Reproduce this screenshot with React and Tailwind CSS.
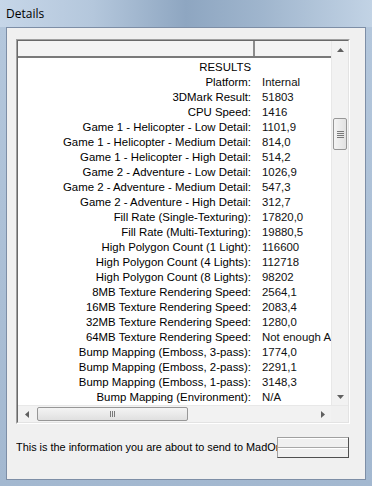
import React from "react";

const rows = [
  ["RESULTS", ""],
  ["Platform:", "Internal"],
  ["3DMark Result:", "51803"],
  ["CPU Speed:", "1416"],
  ["Game 1 - Helicopter - Low Detail:", "1101,9"],
  ["Game 1 - Helicopter - Medium Detail:", "814,0"],
  ["Game 1 - Helicopter - High Detail:", "514,2"],
  ["Game 2 - Adventure - Low Detail:", "1026,9"],
  ["Game 2 - Adventure - Medium Detail:", "547,3"],
  ["Game 2 - Adventure - High Detail:", "312,7"],
  ["Fill Rate (Single-Texturing):", "17820,0"],
  ["Fill Rate (Multi-Texturing):", "19880,5"],
  ["High Polygon Count (1 Light):", "116600"],
  ["High Polygon Count (4 Lights):", "112718"],
  ["High Polygon Count (8 Lights):", "98202"],
  ["8MB Texture Rendering Speed:", "2564,1"],
  ["16MB Texture Rendering Speed:", "2083,4"],
  ["32MB Texture Rendering Speed:", "1280,0"],
  ["64MB Texture Rendering Speed:", "Not enough AGP memory"],
  ["Bump Mapping (Emboss, 3-pass):", "1774,0"],
  ["Bump Mapping (Emboss, 2-pass):", "2291,1"],
  ["Bump Mapping (Emboss, 1-pass):", "3148,3"],
  ["Bump Mapping (Environment):", "N/A"],
];

const Arrow = ({ dir }) => {
  const pts = {
    up: "0,4 3.5,0 7,4",
    down: "0,0 3.5,4 7,0",
    left: "4,0 0,3.5 4,7",
    right: "0,0 4,3.5 0,7",
  }[dir];
  const vert = dir === "up" || dir === "down";
  return (
    <svg width={vert ? 7 : 4} height={vert ? 4 : 7}>
      <polygon points={pts} fill="#606060" />
    </svg>
  );
};

const App = () => {
  return (
    <div className="w-[372px] h-[486px] flex flex-col bg-[#a9bdd4] font-['Liberation_Sans',Arial,sans-serif] text-[11.4px] text-black overflow-hidden">
      {/* title bar */}
      <div className="h-[27px] flex items-center pl-[6px] bg-[linear-gradient(90deg,#c6d6e8_0%,#b4c7dc_25%,#8ea6c1_50%,#9fb5cd_70%,#c2d3e5_100%)]">
        <span className="font-['Open_Sans',sans-serif] text-[12px] text-black">Details</span>
      </div>

      <div className="flex-1 flex px-[6px] pb-[6px] bg-[linear-gradient(180deg,#b4c7dc_0%,#a3b8d0_100%)]">
        {/* client area */}
        <div className="flex-1 flex flex-col bg-[#f0f0f0] border border-[#7d8ea6]">
          {/* listbox */}
          <div className="ml-[9px] mt-[11px] w-[334px] h-[385px] border border-t-[#a0a0a0] border-l-[#a0a0a0] border-r-[#ffffff] border-b-[#ffffff]">
            <div className="w-full h-full border border-t-[#696969] border-l-[#696969] border-r-[#e3e3e3] border-b-[#e3e3e3] flex flex-col bg-white">
              <div className="flex h-[364px]">
                {/* content */}
                <div className="w-[313px] flex flex-col overflow-hidden">
                  <div className="h-[17px] flex bg-[#f4f4f4] border-b-2 border-b-[#7a7a7a]">
                    <div className="w-[237px] border-r-2 border-r-[#8c8c8c]" />
                    <div className="flex-1" />
                  </div>
                  <div className="pt-[2px] flex flex-col">
                    {rows.map(([label, value]) => (
                      <div key={label} className="h-[15px] flex items-center whitespace-nowrap">
                        <div className="w-[237px] shrink-0 overflow-hidden text-right pr-[4px] leading-[15px]">{label}</div>
                        <div className="pl-[7px] leading-[15px] text-[#111]">{value}</div>
                      </div>
                    ))}
                  </div>
                </div>
                {/* vertical scrollbar */}
                <div className="w-[17px] flex flex-col bg-[#f2f2f2] border-l border-l-[#e8e8e8]">
                  <div className="h-[17px] flex items-center justify-center">
                    <Arrow dir="up" />
                  </div>
                  <div className="flex-1 flex flex-col items-center">
                    <div className="mt-[60px] w-[14px] h-[32px] rounded-[2px] border border-[#979797] bg-[linear-gradient(90deg,#f4f4f4,#e2e2e2)] flex flex-col items-center justify-center gap-[1px]">
                      <div className="w-[7px] h-[1px] bg-[#7a7a7a]" />
                      <div className="w-[7px] h-[1px] bg-[#7a7a7a]" />
                      <div className="w-[7px] h-[1px] bg-[#7a7a7a]" />
                      <div className="w-[7px] h-[1px] bg-[#7a7a7a]" />
                    </div>
                  </div>
                  <div className="h-[17px] flex items-center justify-center">
                    <Arrow dir="down" />
                  </div>
                </div>
              </div>
              {/* horizontal scrollbar */}
              <div className="flex-1 flex bg-[#f2f2f2] border-t border-t-[#e8e8e8]">
                <div className="w-[313px] flex items-center">
                  <div className="w-[17px] flex justify-center">
                    <Arrow dir="left" />
                  </div>
                  <div className="ml-[2px] w-[151px] h-[14px] rounded-[2px] border border-[#979797] bg-[linear-gradient(180deg,#f4f4f4,#e0e0e0)] flex items-center justify-center gap-[1px]">
                    <div className="w-[1px] h-[6px] bg-[#7a7a7a]" />
                    <div className="w-[1px] h-[6px] bg-[#7a7a7a]" />
                    <div className="w-[1px] h-[6px] bg-[#7a7a7a]" />
                  </div>
                  <div className="flex-1" />
                  <div className="w-[17px] flex justify-center">
                    <Arrow dir="right" />
                  </div>
                </div>
                <div className="w-[17px] bg-[#f0f0f0]" />
              </div>
            </div>
          </div>

          {/* bottom line */}
          <div className="mt-[13px] ml-[9px] flex items-center">
            <div className="w-[261px] overflow-hidden whitespace-nowrap text-[10.9px]">
              This is the information you are about to send to MadOnion.com
            </div>
            <div className="w-[72px] h-[21px] border border-t-[#a0a0a0] border-l-[#a0a0a0] border-r-[#505050] border-b-[#505050] bg-[#f0f0f0] flex flex-col">
              <div className="flex-1 border-t border-t-white border-b border-b-[#a8a8a8]" />
              <div className="flex-1 border-t border-t-white" />
            </div>
          </div>
        </div>
      </div>
    </div>
  );
};

export default App;
